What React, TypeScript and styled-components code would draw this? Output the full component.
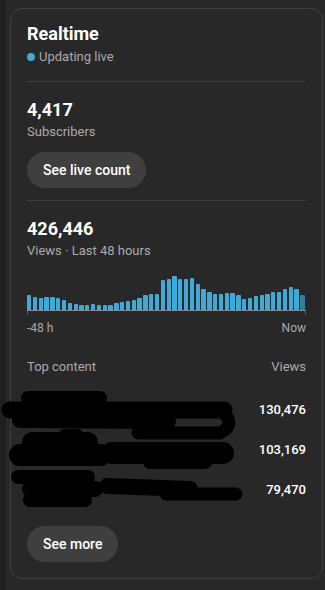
import React from "react";
import styled, { createGlobalStyle } from "styled-components";

const GlobalStyle = createGlobalStyle`
  html, body {
    margin: 0;
    padding: 0;
    background: #282828;
  }
  body {
    font-family: Roboto, "Noto Sans", "Liberation Sans", sans-serif;
    color: #ffffff;
    -webkit-font-smoothing: antialiased;
  }
`;

const Page = styled.div`
  display: flex;
  min-height: 590px;
  background: #282828;
`;

const SideStrip = styled.div`
  width: 6px;
  flex: none;
  background: #1f1f1f;
`;

const Main = styled.div`
  flex: 1;
  padding: 8px 2px 10px 4px;
`;

const Card = styled.section`
  border: 1px solid #3f3f3f;
  border-radius: 12px;
  padding: 16px 16px 16px 16px;
  display: flex;
  flex-direction: column;
`;

const Title = styled.h2`
  margin: 0;
  font-size: 18px;
  line-height: 18px;
  font-weight: 700;
  color: #ffffff;
`;

const LiveLine = styled.div`
  margin-top: 4px;
  display: flex;
  align-items: center;
  gap: 4px;
  font-size: 13px;
  line-height: 20px;
  color: #aaaaaa;
`;

const LiveDot = styled.span`
  width: 8px;
  height: 8px;
  border-radius: 50%;
  background: #3eaad8;
  margin-top: -1px;
`;

const Divider = styled.hr<{ $top: number }>`
  border: none;
  height: 1px;
  background: #3e3e3e;
  margin: ${(p) => p.$top}px 0 0 0;
`;

const BigNumber = styled.div<{ $top: number }>`
  margin-top: ${(p) => p.$top}px;
  font-size: 18px;
  line-height: 24px;
  font-weight: 700;
  color: #ffffff;
`;

const Caption = styled.div`
  font-size: 13px;
  line-height: 20px;
  color: #aaaaaa;
`;

const PillButton = styled.button<{ $top: number }>`
  align-self: flex-start;
  margin-top: ${(p) => p.$top}px;
  height: 36px;
  padding: 0 16px;
  border: none;
  border-radius: 18px;
  background: #3f3f3f;
  color: #ffffff;
  font-family: Roboto, "Noto Sans", sans-serif;
  font-size: 14px;
  font-weight: 500;
  cursor: pointer;
`;

const Chart = styled.div`
  margin-top: 9px;
  height: 40px;
  display: flex;
  align-items: flex-end;
  gap: 1.5px;
  padding-right: 1.5px;
`;

const Bar = styled.div<{ $current?: boolean }>`
  flex: 1;
  background: ${(p) => (p.$current ? "#2f7f9f" : "#3eaad8")};
  border-radius: 1px 1px 0 0;
`;

const Axis = styled.div`
  height: 4px;
  border-top: 1px solid #8a8a8a;
  display: flex;
  justify-content: space-between;
`;

const Tick = styled.span`
  width: 1px;
  height: 4px;
  background: #5a5a5a;
`;

const AxisLabels = styled.div`
  margin-top: 5px;
  display: flex;
  justify-content: space-between;
  font-size: 12px;
  line-height: 16px;
  color: #aaaaaa;
`;

const TableHead = styled.div`
  margin-top: 21px;
  display: flex;
  justify-content: space-between;
  font-size: 13px;
  line-height: 20px;
  color: #aaaaaa;
`;

const Rows = styled.div`
  position: relative;
  margin-top: 13px;
  display: flex;
  flex-direction: column;
`;

const Row = styled.div`
  height: 40px;
  display: flex;
  align-items: center;
  justify-content: space-between;
`;

const RowTitle = styled.div`
  flex: 1;
`;

const RowViews = styled.div`
  font-size: 13px;
  line-height: 20px;
  font-weight: 500;
  color: #ffffff;
`;

const Redaction = styled.svg`
  position: absolute;
  left: -27px;
  top: 0;
  width: 250px;
  height: 120px;
  pointer-events: none;
  overflow: visible;
`;

const bars = [
  15, 12.7, 12.3, 13, 13, 12.3, 10, 7, 6, 5, 5, 6, 5, 5, 5, 7, 8, 9, 10, 12,
  14.7, 16, 16, 30, 31, 33.7, 31, 31, 31.7, 26, 21, 18, 16, 16, 17, 17, 15, 11,
  12, 14, 15, 16, 18, 18, 21, 23, 21, 15,
];

const rows = [
  { id: 1, views: "130,476" },
  { id: 2, views: "103,169" },
  { id: 3, views: "79,470" },
];

export default function App() {
  return (
    <>
      <GlobalStyle />
      <Page>
        <SideStrip />
        <Main>
          <Card>
            <Title>Realtime</Title>
            <LiveLine>
              <LiveDot />
              Updating live
            </LiveLine>
            <Divider $top={14} />

            <BigNumber $top={16}>4,417</BigNumber>
            <Caption>Subscribers</Caption>
            <PillButton $top={10}>See live count</PillButton>
            <Divider $top={12} />

            <BigNumber $top={16}>426,446</BigNumber>
            <Caption>Views · Last 48 hours</Caption>
            <Chart>
              {bars.map((h, i) => (
                <Bar
                  key={i}
                  $current={i === bars.length - 1}
                  style={{ height: `${h}px` }}
                />
              ))}
            </Chart>
            <Axis>
              <Tick />
              <Tick />
            </Axis>
            <AxisLabels>
              <span>-48 h</span>
              <span>Now</span>
            </AxisLabels>

            <TableHead>
              <span>Top content</span>
              <span>Views</span>
            </TableHead>
            <Rows>
              {rows.map((r) => (
                <Row key={r.id}>
                  <RowTitle />
                  <RowViews>{r.views}</RowViews>
                </Row>
              ))}
              <Redaction viewBox="0 0 250 120">
                <g
                  fill="none"
                  stroke="#000"
                  strokeLinecap="round"
                  strokeLinejoin="round"
                >
                  <path d="M28 8 L100 8" strokeWidth="14" />
                  <path d="M10 20 L224 20" strokeWidth="17" />
                  <path d="M20 30 L168 31" strokeWidth="16" />
                  <path d="M220 20 Q238 34 220 43 L138 43" strokeWidth="13" />
                  <path d="M32 52 L88 52" strokeWidth="20" />
                  <path d="M64 44 L78 44" strokeWidth="10" />
                  <path d="M20 65 L100 65" strokeWidth="22" />
                  <path d="M112 63 L223 63" strokeWidth="22" />
                  <path d="M150 72 L205 72" strokeWidth="14" />
                  <path d="M18 87 L88 87" strokeWidth="14" />
                  <path d="M30 99 L95 99" strokeWidth="16" />
                  <path d="M30 110 L85 110" strokeWidth="14" />
                  <path d="M107 96 L190 99" strokeWidth="16" />
                  <path d="M166 104 L236 104" strokeWidth="13" />
                </g>
              </Redaction>
            </Rows>

            <PillButton $top={16}>See more</PillButton>
          </Card>
        </Main>
      </Page>
    </>
  );
}
